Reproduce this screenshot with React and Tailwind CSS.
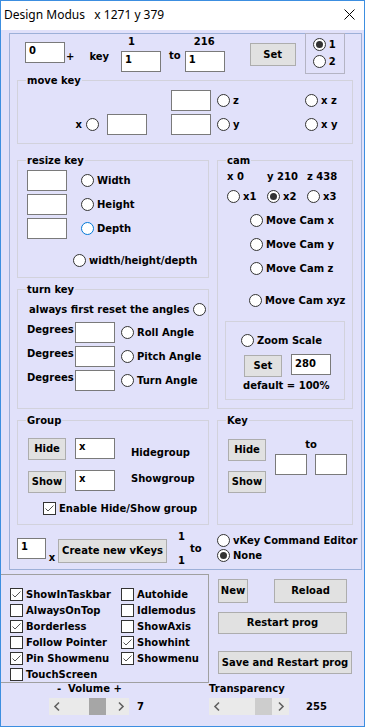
import React from "react";

const LAV = "bg-[#e1e1fa]";

function Field({ className = "", v = "", pt = "pt-[2px]" }) {
  return (
    <div className={`bg-white border border-[#7a7a7a] pl-[3px] ${pt} leading-[12px] shrink-0 ${className}`}>
      {v}
    </div>
  );
}

function Btn({ className = "", children }) {
  return (
    <div className={`bg-[#e1e1e1] border border-[#adadad] flex items-center justify-center shrink-0 ${className}`}>
      {children}
    </div>
  );
}

function Radio({ on, blue, className = "" }) {
  return (
    <span
      className={`w-[13px] h-[13px] rounded-full bg-white border flex items-center justify-center shrink-0 ${
        blue ? "border-[#0078d7]" : "border-[#333333]"
      } ${className}`}
    >
      {on && <span className="w-[7px] h-[7px] rounded-full bg-[#333333]" />}
    </span>
  );
}

function RadioLabel({ on, blue, label, className = "" }) {
  return (
    <div className={`flex items-center shrink-0 ${className}`}>
      <Radio on={on} blue={blue} />
      <span className="ml-[3px] whitespace-nowrap">{label}</span>
    </div>
  );
}

function Check({ on }) {
  return (
    <span className="w-[13px] h-[13px] bg-white border border-[#333333] shrink-0 flex items-center justify-center">
      {on && (
        <svg width="11" height="11" viewBox="0 0 11 11">
          <path d="M1.5 5.5 L4 8 L9.5 2.5" fill="none" stroke="#555" strokeWidth="1" />
        </svg>
      )}
    </span>
  );
}

function Box({ label, className = "", children }) {
  return (
    <div className={`relative border border-[#d2d2dc] shrink-0 ${className}`}>
      {label && (
        <span className={`absolute left-[8px] -top-[6px] px-[1px] ${LAV} leading-[12px] whitespace-nowrap`}>
          {label}
        </span>
      )}
      {children}
    </div>
  );
}

function Chevron({ dir }) {
  return (
    <svg width="17" height="17" viewBox="0 0 17 17" className="shrink-0">
      <path
        d={dir === "l" ? "M10 4.5 L6 8.5 L10 12.5" : "M7 4.5 L11 8.5 L7 12.5"}
        fill="none"
        stroke="#606060"
        strokeWidth="1.6"
      />
    </svg>
  );
}

function Scroll({ thumb, dark }) {
  return (
    <div className="w-[80px] h-[17px] bg-[#eaeaea] flex items-center shrink-0">
      <Chevron dir="l" />
      <div className="w-[46px] h-[17px] flex">
        <div className={`w-[17px] h-[17px] ${thumb} ${dark ? "bg-[#a6a6a6]" : "bg-[#cdcdcd]"}`} />
      </div>
      <Chevron dir="r" />
    </div>
  );
}

export default function App() {
  return (
    <div className={`w-[365px] h-[727px] border border-[#3c8ee0] ${LAV} flex flex-col overflow-hidden font-['DejaVu_Sans',sans-serif] font-bold text-[10px] leading-[12px] text-black`}>
      {/* TITLE BAR */}
      <div className="h-[29px] shrink-0 bg-white flex items-center justify-between pl-[3px] pr-[9px] pb-[2px] font-['Noto_Sans',sans-serif] font-normal text-[12px] whitespace-pre">
        <span>Design Modus   x 1271 y 379</span>
        <svg width="11" height="11" viewBox="0 0 11 11">
          <path d="M0.5 0.5 L10.5 10.5 M10.5 0.5 L0.5 10.5" stroke="#000" strokeWidth="1" />
        </svg>
      </div>

      {/* MAIN PANEL */}
      <div className="ml-[8px] mt-[3px] w-[353px] h-[537px] border border-[#9db0d8] flex flex-col shrink-0">
        {/* top row */}
        <div className="flex items-start h-[46px] shrink-0">
          <Field className="ml-[15px] mt-[8px] w-[40px] h-[21px]" v="0" />
          <span className="ml-[1px] mt-[17px]">+</span>
          <span className="ml-[15px] mt-[17px]">key</span>
          <div className="ml-[12px] mt-[2px] flex flex-col w-[40px]">
            <span className="ml-[7px]">1</span>
            <Field className="mt-[3px] w-[40px] h-[21px]" v="1" />
          </div>
          <span className="ml-[8px] mt-[16px]">to</span>
          <div className="ml-[4px] mt-[2px] flex flex-col w-[40px]">
            <span className="ml-[9px]">216</span>
            <Field className="mt-[3px] w-[40px] h-[21px]" v="1" />
          </div>
          <Btn className="ml-[25px] mt-[9px] w-[46px] h-[23px]">Set</Btn>
          <div className="ml-[9px] -mt-[1px] w-[40px] h-[41px] border border-[#b4b4c4] flex flex-col gap-[4px] pl-[7px] pt-[4px]">
            <RadioLabel on label="1" />
            <RadioLabel label="2" />
          </div>
        </div>

        {/* move key */}
        <Box label="move key" className="ml-[7px] w-[336px] h-[64px] flex flex-col">
          <div className="mt-[9px] flex items-center">
            <div className="w-[153px] shrink-0" />
            <Field className="w-[40px] h-[21px]" />
            <RadioLabel className="ml-[6px] w-[88px]" label="z" />
            <RadioLabel label="x z" />
          </div>
          <div className="mt-[3px] flex items-center">
            <div className="w-[89px] shrink-0 flex items-center justify-end pr-[8px]">
              <span className="mr-[4px]">x</span>
              <Radio />
            </div>
            <Field className="w-[40px] h-[21px]" />
            <div className="w-[24px] shrink-0" />
            <Field className="w-[40px] h-[21px]" />
            <RadioLabel className="ml-[6px] w-[88px]" label="y" />
            <RadioLabel label="x y" />
          </div>
        </Box>

        {/* resize / turn / cam */}
        <div className="mt-[16px] ml-[7px] flex gap-[8px] shrink-0">
          <div className="flex flex-col w-[192px]">
            <Box label="resize key" className="h-[118px] flex flex-col">
              {["Width", "Height", "Depth"].map((l, i) => (
                <div key={l} className={`flex items-center ${i === 0 ? "mt-[9px]" : "mt-[3px]"}`}>
                  <Field className="ml-[9px] w-[40px] h-[21px]" />
                  <RadioLabel className="ml-[14px]" label={l} blue={l === "Depth"} />
                </div>
              ))}
              <RadioLabel className="mt-[15px] ml-[55px]" label="width/height/depth" />
            </Box>

            <Box label="turn key" className="mt-[11px] h-[120px] flex flex-col">
              <div className="mt-[13px] ml-[11px] flex items-center">
                <span className="whitespace-nowrap">always first reset the angles</span>
                <Radio className="ml-[4px]" />
              </div>
              {["Roll Angle", "Pitch Angle", "Turn Angle"].map((l, i) => (
                <div key={l} className={`flex items-start ml-[9px] ${i === 0 ? "mt-[6px]" : "mt-[3px]"}`}>
                  <span className="w-[48px] mt-[2px] shrink-0">Degrees</span>
                  <Field className="w-[40px] h-[21px]" />
                  <div className="h-[21px] flex items-center ml-[6px]">
                    <RadioLabel label={l} />
                  </div>
                </div>
              ))}
            </Box>
          </div>

          <Box label="cam" className="w-[136px] h-[249px] flex flex-col">
            <div className="mt-[10px] ml-[9px] flex whitespace-nowrap">
              <span className="w-[40px]">x 0</span>
              <span className="w-[40px]">y 210</span>
              <span>z 438</span>
            </div>
            <div className="mt-[7px] ml-[9px] flex">
              <RadioLabel className="w-[40px]" label="x1" />
              <RadioLabel className="w-[40px]" on label="x2" />
              <RadioLabel label="x3" />
            </div>
            <RadioLabel className="mt-[11px] ml-[32px]" label="Move Cam x" />
            <RadioLabel className="mt-[11px] ml-[32px]" label="Move Cam y" />
            <RadioLabel className="mt-[11px] ml-[32px]" label="Move Cam z" />
            <RadioLabel className="mt-[19px] ml-[31px]" label="Move Cam xyz" />
            <Box className="mt-[14px] ml-[7px] w-[120px] h-[79px] flex flex-col">
              <RadioLabel className="mt-[12px] ml-[15px]" label="Zoom Scale" />
              <div className="mt-[7px] flex items-start">
                <Btn className="ml-[18px] mt-[1px] w-[38px] h-[22px]">Set</Btn>
                <Field className="ml-[9px] w-[40px] h-[21px]" pt="pt-[3px]" v="280" />
              </div>
              <span className="mt-[3px] ml-[17px] whitespace-nowrap">default = 100%</span>
            </Box>
          </Box>
        </div>

        {/* group / key */}
        <div className="mt-[11px] ml-[7px] flex gap-[8px] shrink-0">
          <Box label="Group" className="w-[192px] h-[105px] flex flex-col">
            <div className="mt-[17px] ml-[10px] flex items-start">
              <Btn className="w-[38px] h-[22px]">Hide</Btn>
              <Field className="ml-[9px] w-[40px] h-[21px]" v="x" />
              <span className="ml-[16px] mt-[9px]">Hidegroup</span>
            </div>
            <div className="mt-[10px] ml-[10px] flex items-start">
              <Btn className="mt-[1px] w-[38px] h-[22px]">Show</Btn>
              <Field className="ml-[9px] w-[40px] h-[21px]" v="x" />
              <span className="ml-[16px] mt-[3px]">Showgroup</span>
            </div>
            <div className="mt-[9px] ml-[25px] flex items-center">
              <Check on />
              <span className="ml-[3px] whitespace-nowrap">Enable Hide/Show group</span>
            </div>
          </Box>
          <Box label="Key" className="w-[136px] h-[105px] flex">
            <div className="ml-[10px] mt-[18px] flex flex-col">
              <Btn className="w-[38px] h-[22px]">Hide</Btn>
              <Btn className="mt-[10px] w-[38px] h-[22px]">Show</Btn>
            </div>
            <div className="ml-[9px] mt-[18px] flex flex-col w-[72px]">
              <span className="text-center">to</span>
              <div className="mt-[3px] flex gap-[8px]">
                <Field className="w-[32px] h-[21px]" />
                <Field className="w-[32px] h-[21px]" />
              </div>
            </div>
          </Box>
        </div>

        {/* vkeys row */}
        <div className="mt-[6px] flex items-start shrink-0">
          <Field className="ml-[7px] mt-[7px] w-[29px] h-[21px]" v="1" />
          <span className="w-[12px] mt-[21px] text-center shrink-0">x</span>
          <Btn className="mt-[8px] w-[109px] h-[24px]">Create new vKeys</Btn>
          <div className="ml-[11px] w-[39px] flex flex-col shrink-0">
            <span>1</span>
            <span className="ml-[12px]">to</span>
            <span>1</span>
          </div>
          <div className="mt-[3px] flex flex-col gap-[2px]">
            <RadioLabel label="vKey Command Editor" />
            <RadioLabel on label="None" />
          </div>
        </div>
      </div>

      {/* OPTIONS + BUTTONS */}
      <div className="mt-[4px] flex shrink-0">
        <div className="w-[208px] h-[109px] border-t border-r border-b border-[#a0a0a0] grid grid-cols-[111px_1fr] auto-rows-[13px] gap-y-[3px] pl-[9px] pt-[13px] content-start shrink-0">
          {[
            ["ShowInTaskbar", true],
            ["Autohide", false],
            ["AlwaysOnTop", false],
            ["Idlemodus", false],
            ["Borderless", true],
            ["ShowAxis", false],
            ["Follow Pointer", false],
            ["Showhint", true],
            ["Pin Showmenu", true],
            ["Showmenu", true],
            ["TouchScreen", false],
          ].map(([l, on]) => (
            <div key={l} className="flex items-center">
              <Check on={on} />
              <span className="ml-[3px] whitespace-nowrap">{l}</span>
            </div>
          ))}
        </div>
        <div className="ml-[9px] flex flex-col">
          <div className="mt-[5px] flex">
            <Btn className="w-[30px] h-[24px]">New</Btn>
            <Btn className="ml-[26px] w-[73px] h-[24px]">Reload</Btn>
          </div>
          <Btn className="mt-[9px] w-[129px] h-[22px]">Restart prog</Btn>
          <Btn className="mt-[17px] w-[134px] h-[23px]">Save and Restart prog</Btn>
        </div>
      </div>

      {/* SLIDERS */}
      <div className="flex shrink-0">
        <div className="ml-[48px] w-[160px] flex flex-col shrink-0">
          <span className="ml-[8px] whitespace-pre">-  Volume +</span>
          <div className="mt-[3px] flex items-center">
            <Scroll thumb="ml-[23px]" dark />
            <span className="ml-[8px]">7</span>
          </div>
        </div>
        <div className="flex flex-col">
          <span>Transparency</span>
          <div className="mt-[3px] flex items-center">
            <Scroll thumb="ml-[29px]" />
            <span className="ml-[17px]">255</span>
          </div>
        </div>
      </div>
    </div>
  );
}
